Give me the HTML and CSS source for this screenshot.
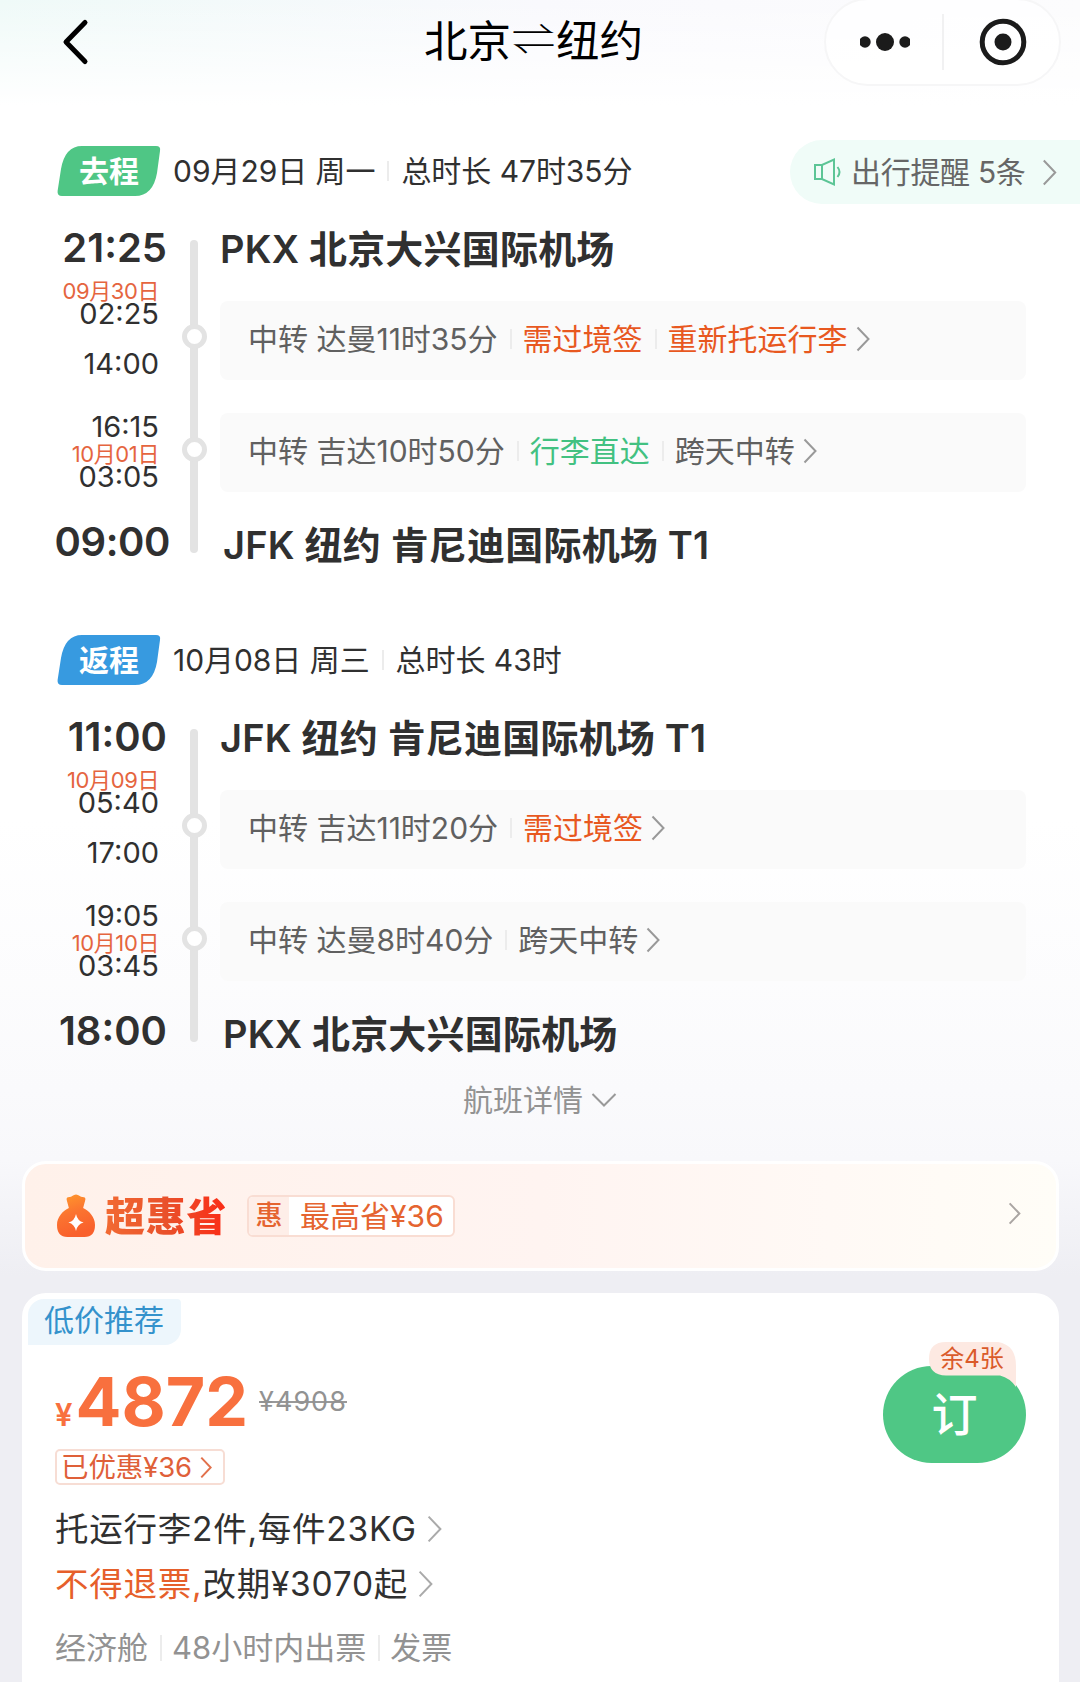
FILE: index.html
```html
<!DOCTYPE html>
<html lang="zh-CN">
<head>
<meta charset="utf-8">
<title>北京⇌纽约</title>
<link rel="stylesheet" href="styles.css">
</head>
<body>
<svg class="defs" width="0" height="0" aria-hidden="true">
  <symbol id="chev" viewBox="0 0 14 26"><path d="M1.5 1.5 L12.5 13 L1.5 24.5" fill="none" stroke="currentColor" stroke-width="2" vector-effect="non-scaling-stroke"/></symbol>
</svg>
<div class="page">
  <header class="nav">
    <svg class="back" width="30" height="48" viewBox="0 0 30 48"><path d="M25 4.500 L6 24 L25 43.500" fill="none" stroke="#000" stroke-width="5" stroke-linecap="round" stroke-linejoin="round"/></svg>
    <h1 class="title">北京<span class="swap">⇌</span>纽约</h1>
    <div class="capsule">
      <svg width="50" height="20" viewBox="0 0 50 20" fill="#1b1b1b"><circle cx="5" cy="10" r="5.700"/><circle cx="25" cy="10" r="9"/><circle cx="45" cy="10" r="5.700"/></svg>
      <i></i>
      <svg width="48" height="48" viewBox="0 0 48 48"><circle cx="24" cy="24" r="20.800" fill="none" stroke="#1b1b1b" stroke-width="5"/><circle cx="24" cy="24" r="8.500" fill="#1b1b1b"/></svg>
    </div>
  </header>

  <section class="leg">
    <div class="leg-head">
      <div class="badge"><svg width="104" height="50" viewBox="0 0 104 50"><path d="M25 0 H99 Q104 0 103 5 L100 27 Q96 50 78 50 H5 Q0 50 .6 45 L4 23 Q8 0 25 0Z" fill="#4fc685"/></svg><b>去程</b></div>
      <span class="date">09月29日 周一</span><i class="sep"></i><span class="dur">总时长 47时35分</span>
      <div class="notice">
        <svg width="30" height="30" viewBox="0 0 30 30" fill="none" stroke="#5cc596" stroke-width="2"><path d="M3 8 H10 L22 2.500 V27.500 L10 22 H3Z M10 8 V22 M25.500 10 Q29.500 15 25.500 20"/></svg>
        <span>出行提醒 5条</span><svg class="chev" width="15" height="27"><use href="#chev"/></svg>
      </div>
    </div>
    <div class="leg-body">
      <div class="times">
        <div class="big">21:25</div>
        <div class="stop first"><em class="day">09月30日</em><span class="tight">02:25</span><span class="leave">14:00</span></div>
        <div class="stop"><span>16:15</span><em class="day later">10月01日</em><span class="tight">03:05</span></div>
        <div class="big last"><span class="wide">09:00</span></div>
      </div>
      <div class="rail"><i></i><i></i></div>
      <div class="places">
        <div class="airport">PKX 北京大兴国际机场</div>
        <div class="layover"><span>中转 达曼11时35分</span><i class="sep"></i><span class="warn">需过境签</span><i class="sep"></i><span class="warn">重新托运行李</span><svg class="chev" width="14" height="26"><use href="#chev"/></svg></div>
        <div class="layover"><span>中转 吉达10时50分</span><i class="sep"></i><span class="good">行李直达</span><i class="sep"></i><span>跨天中转</span><svg class="chev" width="14" height="26"><use href="#chev"/></svg></div>
        <div class="airport end">JFK 纽约 肯尼迪国际机场 T1</div>
      </div>
    </div>
  </section>

  <section class="leg">
    <div class="leg-head">
      <div class="badge"><svg width="104" height="50" viewBox="0 0 104 50"><path d="M25 0 H99 Q104 0 103 5 L100 27 Q96 50 78 50 H5 Q0 50 .6 45 L4 23 Q8 0 25 0Z" fill="#379ae0"/></svg><b>返程</b></div>
      <span class="date">10月08日 周三</span><i class="sep"></i><span class="dur">总时长 43时</span>
    </div>
    <div class="leg-body">
      <div class="times">
        <div class="big">11:00</div>
        <div class="stop first"><em class="day">10月09日</em><span class="tight">05:40</span><span class="leave">17:00</span></div>
        <div class="stop"><span>19:05</span><em class="day later">10月10日</em><span class="tight">03:45</span></div>
        <div class="big last">18:00</div>
      </div>
      <div class="rail"><i></i><i></i></div>
      <div class="places">
        <div class="airport">JFK 纽约 肯尼迪国际机场 T1</div>
        <div class="layover"><span>中转 吉达11时20分</span><i class="sep"></i><span class="warn">需过境签</span><svg class="chev" width="14" height="26"><use href="#chev"/></svg></div>
        <div class="layover"><span>中转 达曼8时40分</span><i class="sep"></i><span>跨天中转</span><svg class="chev" width="14" height="26"><use href="#chev"/></svg></div>
        <div class="airport end">PKX 北京大兴国际机场</div>
      </div>
    </div>
  </section>

  <div class="details"><span>航班详情</span><svg width="26" height="14" viewBox="0 0 26 14"><path d="M1.500 1 L13 12.500 L24.500 1" fill="none" stroke="#999" stroke-width="2"/></svg></div>

  <div class="promo">
    <svg class="bag" width="38" height="44" viewBox="0 0 40 44" preserveAspectRatio="none">
      <defs><linearGradient id="bagfill" x1="0" y1="0" x2=".3" y2="1"><stop offset="0" stop-color="#ff9a2c"/><stop offset=".5" stop-color="#fb7430"/><stop offset="1" stop-color="#f9602c"/></linearGradient></defs>
      <path d="M10.500 7 Q9 3 13 3 Q15 3 16 2 Q20 -1 24 2 Q25 3 27 3 Q31 3 29.500 7 L27.500 14 C34 17 40 23 40 31 Q40 43 29 43 H11 Q0 43 0 31 C0 23 6 17 12.500 14Z" fill="url(#bagfill)"/>
      <path d="M20 20 Q21.500 27 28 28.500 Q21.500 30 20 37 Q18.500 30 12 28.500 Q18.500 27 20 20Z" fill="#fff"/>
    </svg>
    <strong class="brand">超惠省</strong>
    <div class="coupon"><b>惠</b><span>最高省¥36</span></div>
    <svg class="chev" width="13" height="23"><use href="#chev"/></svg>
  </div>

  <section class="fare">
    <div class="tag">低价推荐</div>
    <div class="fare-main">
      <div class="info">
        <div class="price"><small>¥</small><strong>4872</strong><del>¥4908</del></div>
        <div class="saved"><span>已优惠¥36</span><svg class="chev" width="12" height="23"><use href="#chev"/></svg></div>
        <div class="rule"><span>托运行李2件,每件23KG</span><svg class="chev" width="15" height="28"><use href="#chev"/></svg></div>
        <div class="rule change"><span><em>不得退票,</em>改期¥3070起</span><svg class="chev" width="15" height="28"><use href="#chev"/></svg></div>
        <div class="meta"><span>经济舱</span><i class="sep"></i><span>48小时内出票</span><i class="sep"></i><span>发票</span></div>
      </div>
      <div class="book">订
        <div class="left"><svg width="88" height="45" viewBox="0 0 88 45"><path d="M17 0 H69 Q87 3 87 24 V45 Q81 36 71 33.500 H17 Q0 33 0 17 Q0 0 17 0Z" fill="#fde9e2"/></svg><span>余4张</span></div>
      </div>
    </div>
  </section>
</div>
</body>
</html>
```
FILE: styles.css
```css
* { box-sizing: border-box; }
body {
  margin: 0;
  font-family: Inter, "Noto Sans CJK SC", sans-serif;
  font-weight: 380;
  line-height: 1.2;
  color: #303030;
  background: #eeeef3;
}
em, i { font-style: normal; }
.defs { position: absolute; }
.page {
  width: 1080px;
  height: 1682px;
  overflow: hidden;
  background:
    linear-gradient(180deg, rgba(255,255,255,0), #fff 105px, rgba(255,255,255,0) 106px),
    linear-gradient(90deg, #effaf8, #f9f9fd 50%, #fcfcfd) 0 0 / 100% 105px no-repeat,
    linear-gradient(180deg, #fff 0, #fff 820px, #fafafc 1090px, #f8f8fb 1160px, #eeeef3 1275px);
}
.sep { flex: none; width: 2px; height: 20px; background: #ececec; }
.chev { flex: none; color: #999; }

/* navigation bar */
.nav { display: flex; align-items: flex-start; height: 146px; }
.back { margin: 18px 0 0 60px; }
.title {
  margin: 10px 0 0 334px;
  width: 400px;
  font-size: 43.500px;
  line-height: 62px;
  font-weight: 400;
  color: #000;
  white-space: nowrap;
}
.swap { display: inline-block; width: 45px; text-align: center; font-weight: 300; transform: translateY(-2px) scaleY(.82); }
.capsule {
  flex: none;
  display: flex;
  align-items: center;
  width: 237px;
  height: 88px;
  margin-top: -2px;
  padding-left: 34px;
  border: 2px solid #f6f6f7;
  border-radius: 44px;
  background: rgba(255,255,255,.7);
}
.capsule i { width: 2px; height: 56px; margin: 0 35px 0 32px; background: #f1f1f2; }

/* flight leg */
.leg { height: 489px; }
.leg-head { display: flex; align-items: center; height: 50px; padding-left: 57px; font-size: 30px; line-height: 50px; white-space: nowrap; }
.badge { position: relative; width: 104px; height: 50px; margin-right: 12px; }
.badge svg { display: block; }
.badge b { position: absolute; left: 0; top: 0; width: 104px; text-align: center; color: #fff; font-size: 30px; font-weight: 700; }
.date, .dur { letter-spacing: -.05px; }
.leg-head .sep { margin: 0 12px; }
.notice {
  display: flex;
  align-items: center;
  width: 290px;
  height: 64px;
  margin: 2px 0 0 auto;
  padding-left: 22px;
  border-radius: 32px 0 0 32px;
  background: #f0fcf8;
  color: #666;
}
.notice span { margin: 0 16px 0 9px; letter-spacing: -.3px; }
.leg-body { display: flex; margin-top: 32px; }
.times { width: 167px; text-align: right; }
.big { font-size: 40px; line-height: 40px; font-weight: 600; }
.wide { margin-right: -3px; letter-spacing: -.4px; }
.last { margin-top: 34px; }
.stop { display: flex; flex-direction: column; padding-right: 8px; font-size: 29px; line-height: 23px; margin-top: 40px; }
.stop.first { margin-top: 12px; }
.day { font-size: 22px; letter-spacing: -.4px; color: #e5653f; }
.leave { margin-top: 27px; }
.later { margin-top: 5px; }
.tight { margin-top: -1px; }
.rail {
  display: flex;
  flex-direction: column;
  align-items: center;
  width: 8px;
  height: 313px;
  margin: 12px 0 0 23px;
  padding-top: 84px;
  border-radius: 4px;
  background: #e3e3e3;
}
.rail i { flex: none; width: 25px; height: 25px; margin-bottom: 88px; border: 5px solid #e3e3e3; border-radius: 50%; background: #fff; }
.places { width: 806px; margin-left: 22px; }
.airport { font-size: 38px; line-height: 42px; font-weight: 600; letter-spacing: .2px; white-space: nowrap; }
.airport.end { margin-top: 32px; padding-left: 3px; }
.layover {
  display: flex;
  align-items: center;
  height: 79px;
  margin-top: 33px;
  padding: 0 0 3px 28px;
  border-radius: 8px;
  background: #fafafa;
  font-size: 30px;
  color: #606060;
  white-space: nowrap;
}
.airport + .layover { margin-top: 31px; }
.layover .sep { margin: 0 11px 0 12px; }
.layover .chev { margin-left: 8px; }
.layover .warn { color: #e8581f; }
.layover .good { color: #42c181; }

.details { display: flex; align-items: center; justify-content: center; gap: 8px; height: 36px; margin: -42px 0 43px; font-size: 30px; color: #929292; }

/* promotion strip */
.promo {
  display: flex;
  align-items: center;
  width: 1037px;
  height: 110px;
  margin: 0 0 22px 22px;
  padding: 0 35px 0 32px;
  border: 3px solid #fff;
  border-radius: 24px;
  background: linear-gradient(90deg, #fff1ea, #fff4f1 50%, #fff9f5 78%, #fffdf7);
}
.brand {
  margin: 2px 20px 0 10px;
  font-size: 40px;
  line-height: 50px;
  letter-spacing: .7px;
  font-weight: 900;
  color: transparent;
  background: linear-gradient(90deg, #f26a32, #e9512b 50%, #fb2c16);
  -webkit-background-clip: text;
  background-clip: text;
}
.coupon { display: flex; width: 208px; height: 42px; border: 2px solid #f9ddd3; border-radius: 6px; background: #fff; overflow: hidden; font-size: 30px; line-height: 38px; color: #e56430; white-space: nowrap; }
.coupon b { width: 40px; text-align: center; font-size: 27px; font-weight: 500; background: #feeee8; }
.coupon span { margin-left: 11px; }
.promo .chev { margin: 0 0 5px auto; color: #aaa5a2; }

/* fare card */
.fare { width: 1037px; height: 400px; margin-left: 22px; padding: 6px 0 0 6px; border-radius: 24px 24px 0 0; background: #fff; }
.tag { width: 153px; height: 46px; padding-left: 16px; border-radius: 16px 4px 16px 0; background: #edf6fc; font-size: 30px; line-height: 43px; color: #3492cc; }
.fare-main { display: flex; justify-content: space-between; padding: 0 33px 0 27px; }
.info { white-space: nowrap; }
.price { display: flex; align-items: baseline; height: 80px; margin-top: 16px; line-height: 80px; color: #f8703e; }
.price small { font-size: 31px; font-weight: 600; }
.price strong { margin-left: 3px; font-size: 68px; font-weight: 700; }
.price del { margin-left: 11px; font-size: 27px; letter-spacing: 1px; color: #929292; text-decoration: none; position: relative; top: -15px; background: linear-gradient(#999, #999) 0 50% / 100% 2px no-repeat; line-height: 34px; }
.saved { display: flex; align-items: center; gap: 8px; width: 170px; height: 36px; margin-top: 8px; padding-left: 4px; border: 2px solid #f7ddd4; border-radius: 5px; font-size: 27.500px; letter-spacing: -.1px; color: #df6039; }
.saved .chev { color: #e2714c; }
.rule { display: flex; align-items: center; gap: 10px; height: 44px; margin-top: 22px; font-size: 33.500px; letter-spacing: .75px; }
.rule em { color: #e65f2b; }
.rule .chev { color: #aaa; }
.change { margin-top: 11px; }
.meta { display: flex; align-items: center; height: 40px; margin-top: 22px; font-size: 31px; color: #929292; }
.meta .sep { height: 26px; margin: 0 10px 0 12px; }
.book { position: relative; width: 143px; height: 97px; margin-top: 21px; border-radius: 49px; background: #4fc785; color: #fff; font-size: 46px; font-weight: 500; line-height: 97px; text-align: center; }
.left { position: absolute; left: 46px; top: -24px; width: 88px; height: 45px; }
.left svg { display: block; }
.left span { position: absolute; left: 0; top: 0; width: 86px; font-size: 24px; font-weight: 380; line-height: 33px; color: #da5a2a; text-align: center; }
```
